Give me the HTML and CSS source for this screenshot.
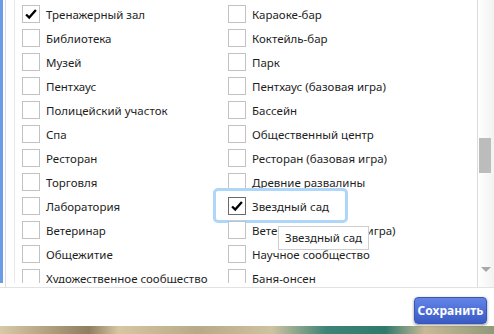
FILE: index.html
```html
<!DOCTYPE html>
<html lang="ru">
<head>
    <meta charset="UTF-8">
    <title>Участки</title>
    <link rel="stylesheet" href="styles.css">
</head>
<body>

<div class="panel">
    <div class="edge"></div>
    <div class="frame">
        <div class="list">
            <label class="item checked"><span class="box"><svg viewBox="0 0 18 18"><path d="M3.5 9.5 L7 13 L14.5 4.5"/></svg></span>Тренажерный зал</label>
            <label class="item"><span class="box"></span>Караоке-бар</label>
            <label class="item"><span class="box"></span>Библиотека</label>
            <label class="item"><span class="box"></span>Коктейль-бар</label>
            <label class="item"><span class="box"></span>Музей</label>
            <label class="item"><span class="box"></span>Парк</label>
            <label class="item"><span class="box"></span>Пентхаус</label>
            <label class="item"><span class="box"></span>Пентхаус (базовая игра)</label>
            <label class="item"><span class="box"></span>Полицейский участок</label>
            <label class="item"><span class="box"></span>Бассейн</label>
            <label class="item"><span class="box"></span>Спа</label>
            <label class="item"><span class="box"></span>Общественный центр</label>
            <label class="item"><span class="box"></span>Ресторан</label>
            <label class="item"><span class="box"></span>Ресторан (базовая игра)</label>
            <label class="item"><span class="box"></span>Торговля</label>
            <label class="item"><span class="box"></span>Древние развалины</label>
            <label class="item"><span class="box"></span>Лаборатория</label>
            <label class="item checked focused"><span class="box"><svg viewBox="0 0 18 18"><path d="M3.5 9.5 L7 13 L14.5 4.5"/></svg></span>Звездный сад<span class="tooltip">Звездный сад</span></label>
            <label class="item"><span class="box"></span>Ветеринар</label>
            <label class="item"><span class="box"></span>Ветеринар (базовая игра)</label>
            <label class="item"><span class="box"></span>Общежитие</label>
            <label class="item"><span class="box"></span>Научное сообщество</label>
            <label class="item"><span class="box"></span>Художественное сообщество</label>
            <label class="item"><span class="box"></span>Баня-онсен</label>
        </div>
    </div>
    <div class="scrollbar">
        <div class="thumb"></div>
        <div class="arrow"></div>
    </div>
</div>

<div class="footer">
    <button type="button" class="save">Сохранить</button>
</div>

<div class="backdrop"></div>

</body>
</html>
```

FILE: styles.css
```css
body {
    margin: 0;
    width: 494px;
    height: 334px;
    overflow: hidden;
    background: #ffffff;
    font-family: 'Noto Sans', 'Open Sans', sans-serif;
    font-size: 11.5px;
    color: #1e1e1e;
}

.panel {
    display: flex;
    height: 287px;
    border-bottom: 1px solid #e2e2e2;
}

.edge {
    width: 3px;
    height: 283px;
    background: #6b9ce6;
    margin-right: 2px;
}

.frame {
    flex: 1;
    display: flex;
    align-items: flex-start;
    border-left: 1px solid #dedede;
    padding-left: 8px;
    border-right: 1px solid #dcdcdc;
}

.list {
    flex: 1;
    height: 281px;
    border-left: 1px solid #e8e8e8;
    padding: 2px 0 0 7px;
    display: grid;
    grid-template-columns: 206px 1fr;
    grid-auto-rows: 24px;
    overflow: hidden;
}

.item {
    position: relative;
    display: flex;
    align-items: center;
    gap: 6px;
    white-space: nowrap;
}

.box {
    width: 16px;
    height: 16px;
    border: 1px solid #c2c2c2;
    background: #ffffff;
    flex-shrink: 0;
}

.box svg {
    width: 16px;
    height: 16px;
    display: block;
}

.box path {
    fill: none;
    stroke: #000000;
    stroke-width: 2.6;
}

.focused .box {
    border-color: #6a6a6a;
}

.focused::before {
    content: "";
    position: absolute;
    left: -15px;
    top: -6px;
    width: 129px;
    height: 29px;
    border: 3px solid #aed6f8;
    border-radius: 5px;
}

.tooltip {
    position: absolute;
    left: 50px;
    top: 32px;
    padding: 3px 6px 4px;
    background: #ffffff;
    border: 1px solid #cfcfcf;
    z-index: 2;
}

.scrollbar {
    position: relative;
    width: 16px;
    background: linear-gradient(90deg, #ffffff, #f2f2f2);
}

.thumb {
    position: absolute;
    left: 1px;
    top: 138px;
    width: 12px;
    height: 35px;
    background: #bcbcbc;
}

.arrow {
    position: absolute;
    left: 3px;
    top: 267px;
    width: 0;
    height: 0;
    border-left: 5px solid transparent;
    border-right: 5px solid transparent;
    border-top: 5px solid #a8a8a8;
}

.footer {
    height: 38px;
    display: flex;
    justify-content: flex-end;
    align-items: flex-start;
    padding: 9px 7px 0 0;
    box-sizing: border-box;
}

.save {
    width: 73px;
    height: 27px;
    padding: 0;
    border: 1px solid #3a56b4;
    border-radius: 4px;
    background: linear-gradient(#6384e6, #3a5ac6);
    color: #ffffff;
    font-family: 'Noto Sans', 'Open Sans', sans-serif;
    font-size: 12px;
    font-weight: bold;
    box-shadow: 0 1px 3px rgba(0, 0, 0, 0.45);
}

.backdrop {
    height: 9px;
    background: linear-gradient(90deg, #d8c9a8 0%, #8f7e60 18%, #d6c6a2 24%, #b8a988 40%, #cfc2a0 55%, #3e8476 66%, #2f7a6c 78%, #c9b996 86%, #8e9a7a 100%);
}
```
